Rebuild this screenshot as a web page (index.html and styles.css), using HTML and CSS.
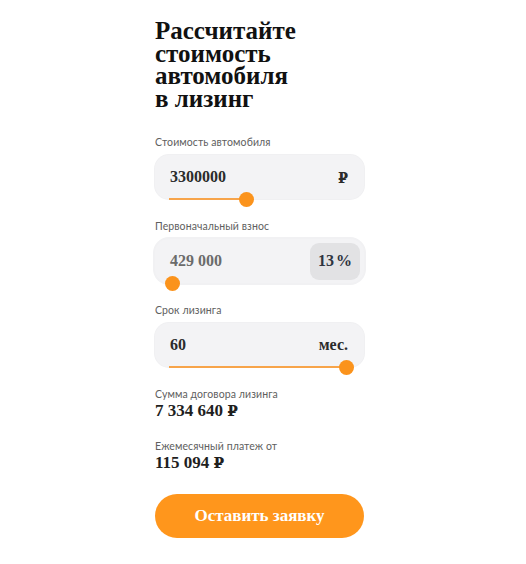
FILE: index.html
```html
<!DOCTYPE html>
<html lang="ru">
<head>
<meta charset="utf-8">
<link rel="stylesheet" href="styles.css">
</head>
<body>
<main class="calc">
  <h1 class="title">Рассчитайте стоимость автомобиля в&nbsp;лизинг</h1>

  <div class="field">
    <div class="label">Стоимость автомобиля</div>
    <div class="box">
      <span class="value">3300000</span>
      <span class="unit rub">₽</span>
      <div class="track"><div class="fill" style="width: 77px"></div><div class="thumb" style="left: 77px"></div></div>
    </div>
  </div>

  <div class="field">
    <div class="label">Первоначальный взнос</div>
    <div class="box box-bordered">
      <span class="value value-muted">429 000</span>
      <span class="badge">13<span class="pct">%</span></span>
      <div class="track"><div class="fill" style="width: 3px"></div><div class="thumb" style="left: 3px"></div></div>
    </div>
  </div>

  <div class="field">
    <div class="label">Срок лизинга</div>
    <div class="box">
      <span class="value">60</span>
      <span class="unit">мес.</span>
      <div class="track"><div class="fill" style="width: 177px"></div><div class="thumb" style="left: 177px"></div></div>
    </div>
  </div>

  <div class="result">
    <div class="label">Сумма договора лизинга</div>
    <div class="sum">7 334 640 <span class="rub">₽</span></div>
  </div>

  <div class="result">
    <div class="label">Ежемесячный платеж от</div>
    <div class="sum">115 094 <span class="rub">₽</span></div>
  </div>

  <button class="btn">Оставить заявку</button>
</main>
</body>
</html>
```

FILE: styles.css
```css
* { box-sizing: border-box; }
html, body { margin: 0; padding: 0; background: #fff; }
body { font-family: "Liberation Serif", "Times New Roman", serif; color: #222; }

.calc {
  width: 209px;
  margin-left: 155px;
  padding-top: 20px;
  display: flex;
  flex-direction: column;
}

.title {
  margin: 0;
  font-size: 25px;
  line-height: 22.5px;
  font-weight: 700;
  color: #111;
  width: 170px;
}

.field { margin-top: 25px; }
.field + .field { margin-top: 20px; }

.label {
  font-family: "Lato", "Inter", sans-serif;
  font-size: 10.5px;
  line-height: 14px;
  color: #606060;
  letter-spacing: 0.1px;
}

.box {
  position: relative;
  margin-top: 6px;
  height: 44px;
  background: #f3f3f5;
  border-radius: 14px;
  display: flex;
  align-items: center;
  justify-content: space-between;
  padding: 0 16px 0 15px;
  box-shadow: 0 0 0 1px #f0f0f2;
}
.box-bordered { padding-right: 4px; box-shadow: 0 0 0 2px #f1f1f3; }

.value {
  font-size: 16px;
  font-weight: 700;
  color: #2b2b2b;
}
.value-muted { color: #6b6b6b; }

.unit {
  font-size: 16px;
  font-weight: 700;
  color: #2b2b2b;
}

.rub {
  font-family: "DejaVu Serif", "Liberation Serif", serif;
  font-size: 0.9em;
}

.badge {
  width: 50px;
  height: 37px;
  border-radius: 9px;
  background: #e2e2e4;
  display: flex;
  align-items: center;
  justify-content: center;
  font-size: 16px;
  font-weight: 700;
  color: #2e3440;
}
.pct { margin-left: 2px; }

.track {
  position: absolute;
  left: 14px;
  right: 16px;
  bottom: -1px;
  height: 2px;
}
.fill {
  height: 2px;
  background: #f7a44a;
}
.thumb {
  position: absolute;
  top: -6.5px;
  width: 15px;
  height: 15px;
  margin-left: -7.5px;
  border-radius: 50%;
  background: #fb931c;
}

.result { margin-top: 20px; }
.result + .result { margin-top: 19px; }
.sum {
  margin-top: 1px;
  font-size: 17px;
  font-weight: 700;
  line-height: 18px;
  color: #1f1f1f;
}

.btn {
  margin-top: 22px;
  height: 44px;
  width: 209px;
  border: 0;
  border-radius: 22px;
  background: #ff961c;
  color: #fff;
  font-family: "Liberation Serif", "Times New Roman", serif;
  font-size: 17px;
  font-weight: 700;
  cursor: pointer;
}
```
